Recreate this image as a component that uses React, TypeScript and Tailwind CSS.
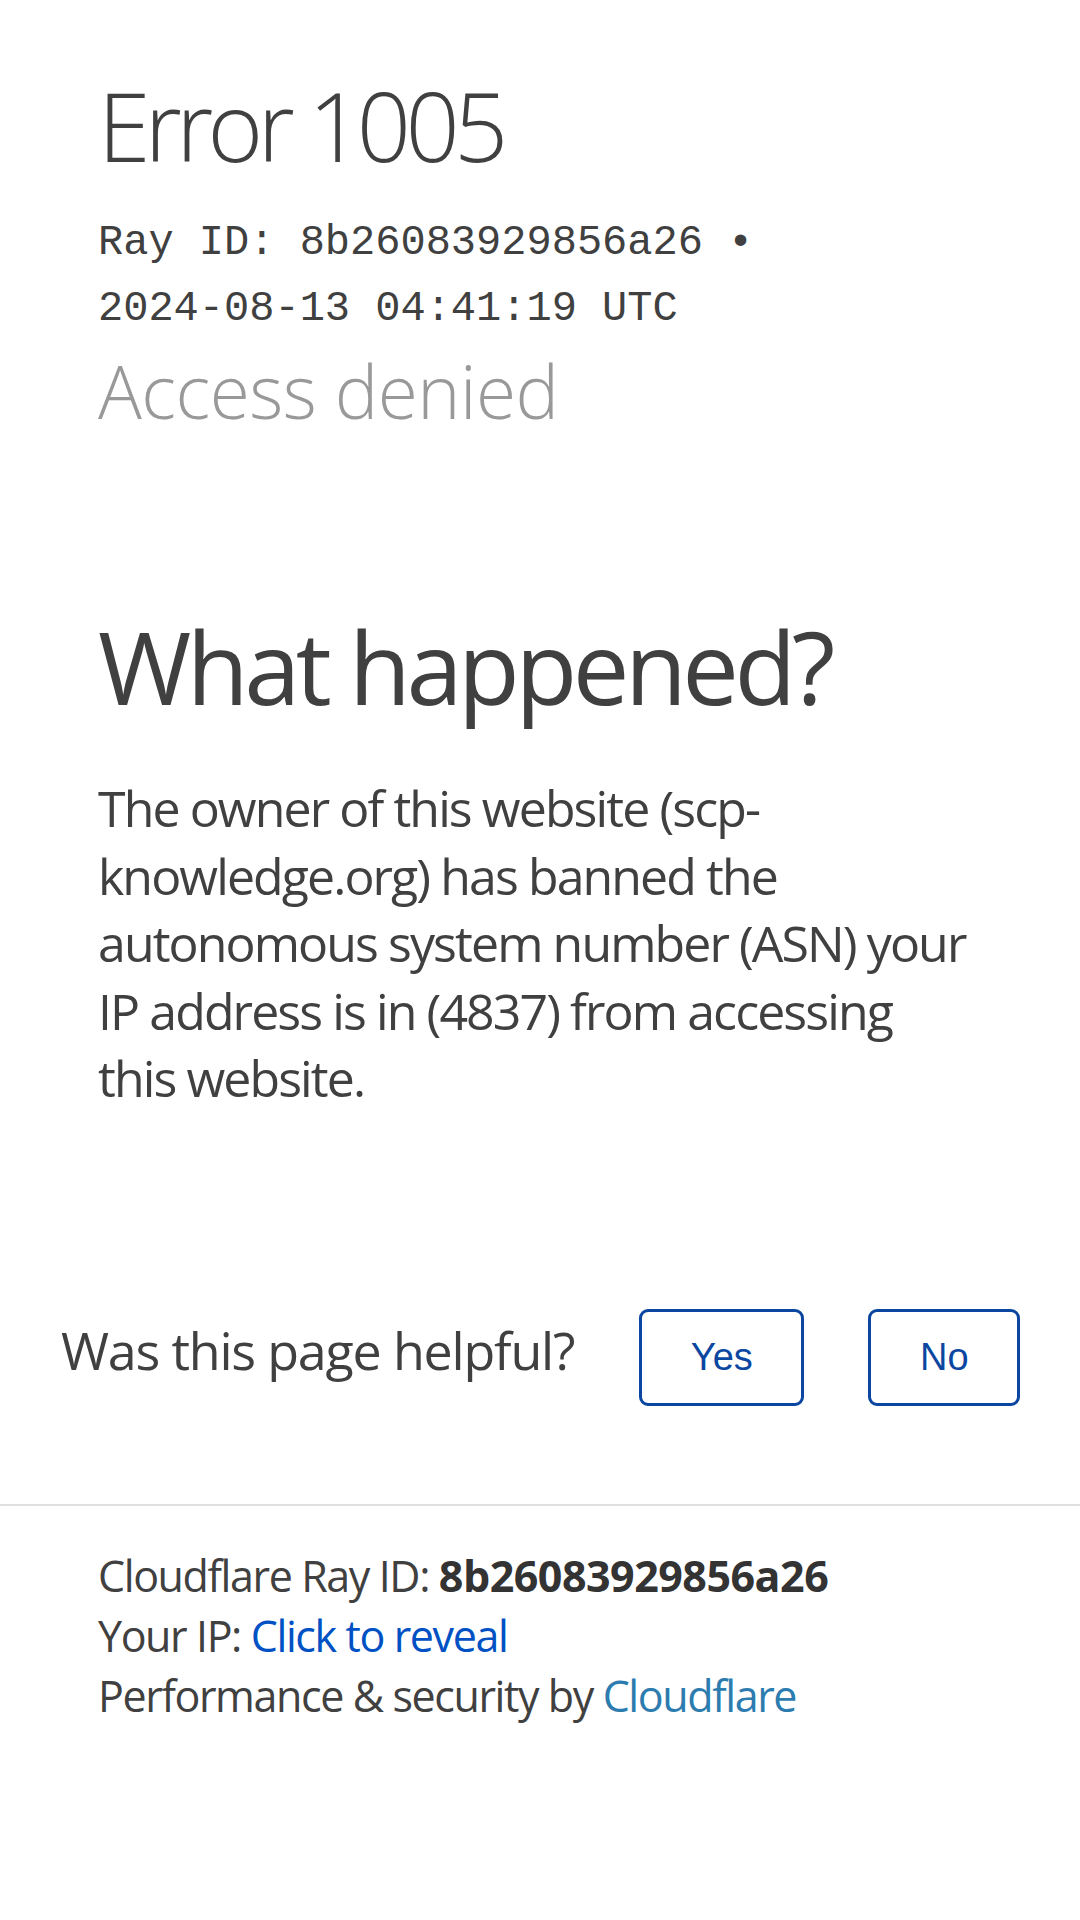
import React from "react";

const sans = "font-['Segoe_UI','Open_Sans','Noto_Sans',sans-serif]";

export default function App() {
  return (
    <div className={`min-h-[1920px] w-[1080px] bg-white text-[#404040] ${sans}`}>
      {/* Header */}
      <section className="px-[98px] pt-[70px]">
        <h1 className="text-[95px] font-light leading-[110px] tracking-[-5.6px] text-[#404040]">
          Error 1005
        </h1>
        <div className="mt-[30px] font-['Liberation_Mono','Courier_New',monospace] text-[42px] leading-[66px] text-[#404040]">
          <span>Ray ID: 8b26083929856a26 •</span>
          <br />
          <span>2024-08-13 04:41:19 UTC</span>
        </div>
        <h2 className="mt-[5px] text-[73px] font-light leading-[88px] tracking-[-0.5px] text-[#999999]">
          Access denied
        </h2>
      </section>

      {/* What happened */}
      <section className="px-[98px] pt-[171px]">
        <h2 className="text-[101px] font-normal leading-[120px] tracking-[-4.5px] text-[#404040]">
          What happened?
        </h2>
        <p className="mt-[49px] text-[50px] leading-[67.5px] tracking-[-1.9px] text-[#404040]">
          The owner of this website (scp-
          <br />
          knowledge.org) has banned the
          <br />
          autonomous system number (ASN) your
          <br />
          IP address is in (4837) from accessing
          <br />
          this website.
        </p>
      </section>

      {/* Feedback */}
      <section className="flex items-start pl-[61px] pt-[196px] pb-[98px]">
        <span className="mt-[6px] text-[52px] leading-[70px] tracking-[-1.2px] text-[#404040]">
          Was this page helpful?
        </span>
        <button className="ml-[65px] h-[97px] w-[165px] rounded-[9px] border-[3px] border-[#0b47a1] bg-white font-['Liberation_Sans',Arial,sans-serif] text-[38px] text-[#0b47a1]">
          Yes
        </button>
        <button className="ml-[64px] h-[97px] w-[152px] rounded-[9px] border-[3px] border-[#0b47a1] bg-white font-['Liberation_Sans',Arial,sans-serif] text-[38px] text-[#0b47a1]">
          No
        </button>
      </section>

      {/* Footer */}
      <footer className="border-t-2 border-[#e0e0e0] px-[98px] pt-[40px] text-[43px] leading-[60px] tracking-[-1.4px]">
        <p>
          Cloudflare Ray ID:{" "}
          <span className="font-bold tracking-[-0.5px] text-[#333333]">8b26083929856a26</span>
        </p>
        <p>
          Your IP: <a className="text-[#0051c3]">Click to reveal</a>
        </p>
        <p>
          Performance &amp; security by <a className="text-[#2c7cb0]">Cloudflare</a>
        </p>
      </footer>
    </div>
  );
}
